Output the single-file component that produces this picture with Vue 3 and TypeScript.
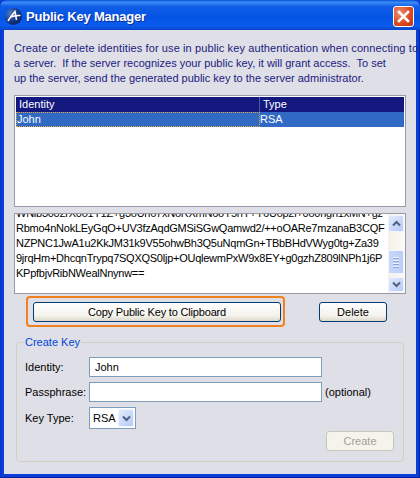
<template>
  <div class="window">
    <header class="titlebar">
      <svg class="app-icon" width="17" height="17" viewBox="0 0 17 17">
        <defs>
          <radialGradient id="orb" cx="0.3" cy="0.3" r="0.9">
            <stop offset="0" stop-color="#4a7ad0" />
            <stop offset="0.6" stop-color="#12307c" />
            <stop offset="1" stop-color="#0a1f5c" />
          </radialGradient>
        </defs>
        <circle cx="8.5" cy="8.5" r="8.5" fill="url(#orb)" />
        <path d="M3 13 Q6 8 10 3.5 L11.5 12 M5.5 9 Q10 7 15.5 7.5" fill="none" stroke="#fff" stroke-width="1.5" />
      </svg>
      <span class="title">Public Key Manager</span>
      <button class="close" type="button">
        <svg width="13" height="13" viewBox="0 0 13 13">
          <path d="M2 2 L11 11 M11 2 L2 11" stroke="#fff" stroke-width="2.6" stroke-linecap="square" />
        </svg>
      </button>
    </header>

    <main class="body">
      <p class="intro">
        <span v-for="line in introLines" :key="line">{{ line }}</span>
      </p>

      <div class="table-box">
        <div class="table-head">
          <span class="col-identity">Identity</span>
          <span class="col-type">Type</span>
        </div>
        <div v-for="row in identities" :key="row.name" class="table-row">
          <span class="col-identity focused">{{ row.name }}</span>
          <span class="col-type">{{ row.type }}</span>
        </div>
      </div>

      <div class="key-box">
        <div class="key-text">
          <div v-for="line in keyLines" :key="line">{{ line }}</div>
        </div>
        <div class="scrollbar">
          <div class="sb-btn">
            <svg width="9" height="7" viewBox="0 0 9 7"><path d="M1 5.5 L4.5 2 L8 5.5" fill="none" stroke="#4d6185" stroke-width="2" /></svg>
          </div>
          <div class="sb-track"></div>
          <div class="sb-thumb"><i></i><i></i><i></i><i></i></div>
          <div class="sb-btn down">
            <svg width="9" height="7" viewBox="0 0 9 7"><path d="M1 1.5 L4.5 5 L8 1.5" fill="none" stroke="#4d6185" stroke-width="2" /></svg>
          </div>
        </div>
      </div>

      <div class="actions">
        <div class="highlight">
          <button class="xp-btn copy" type="button">Copy Public Key to Clipboard</button>
        </div>
        <button class="xp-btn delete" type="button">Delete</button>
      </div>

      <fieldset class="create">
        <legend>Create Key</legend>
        <div class="form-row">
          <label>Identity:</label>
          <div class="input">John</div>
        </div>
        <div class="form-row">
          <label>Passphrase:</label>
          <div class="input"></div>
          <span class="hint">(optional)</span>
        </div>
        <div class="form-row">
          <label>Key Type:</label>
          <div class="select">
            <span>RSA</span>
            <div class="select-btn">
              <svg width="9" height="7" viewBox="0 0 9 7"><path d="M1 1.5 L4.5 5 L8 1.5" fill="none" stroke="#4d6185" stroke-width="2" /></svg>
            </div>
          </div>
        </div>
        <div class="form-footer">
          <button class="xp-btn create-btn" type="button" disabled>Create</button>
        </div>
      </fieldset>
    </main>
  </div>
</template>

<script setup lang="ts">
interface Identity {
  name: string;
  type: string;
}

const introLines: string[] = [
  'Create or delete identities for use in public key authentication when connecting to',
  'a server.\u00a0 If the server recognizes your public key, it will grant access.\u00a0 To set',
  'up the server, send the generated public key to the server administrator.',
];

const identities: Identity[] = [{ name: 'John', type: 'RSA' }];

const keyLines: string[] = [
  'WNlb3002rX0o1Y1Z+g3oUh67xNoRXmN6oY5nY+Y6Uop2l+0o0ngn1xMN+gz',
  'Rbmo4nNokLEyGqO+UV3fzAqdGMSiSGwQamwd2/++oOARe7mzanaB3CQF',
  'NZPNC1JwA1u2KkJM31k9V55ohwBh3Q5uNqmGn+TBbBHdVWyg0tg+Za39',
  '9jrqHm+DhcqnTrypq7SQXQS0ljp+OUqlewmPxW9x8EY+g0gzhZ809lNPh1j6P',
  'KPpfbjvRibNWealNnynw==',
];
</script>

<style>
html,
body {
  margin: 0;
  background: #0a3fd6;
}
</style>

<style scoped>
.window {
  width: 420px;
  height: 478px;
  box-sizing: border-box;
  display: flex;
  flex-direction: column;
  font-family: "Liberation Sans", Arial, sans-serif;
  font-size: 11px;
  color: #000;
  overflow: hidden;
  background: #0a3fd6;
  border-radius: 7px 7px 0 0;
  box-shadow: inset 1px 0 0 #0831d9, inset -1px 0 0 #0020a0, inset 0 -1px 0 #0020a0;
}

.titlebar {
  height: 30px;
  flex: none;
  box-sizing: border-box;
  display: flex;
  align-items: center;
  padding: 3px 6px 0 5px;
  background: linear-gradient(180deg, #0a53dc 0%, #3c8cf6 8%, #0f5ce6 22%, #0454e4 60%, #0a5cf0 85%, #0a45c8 100%);
}

.app-icon {
  flex: none;
  margin-right: 4px;
}

.title {
  flex: 1;
  color: #fff;
  font-size: 13px;
  font-weight: bold;
  letter-spacing: -0.2px;
  text-shadow: 1px 1px 0 #0a2f9c;
}

.close {
  width: 21px;
  height: 21px;
  padding: 0;
  display: flex;
  align-items: center;
  justify-content: center;
  border: 1px solid #fff;
  border-radius: 3px;
  background: radial-gradient(circle at 30% 30%, #ee8a6c, #d8491f 60%, #b83410);
}

.body {
  flex: 1;
  margin: 0 4px 4px;
  padding: 11px 10px 0;
  background: #dfdfe7;
  display: flex;
  flex-direction: column;
  min-height: 0;
}

.intro {
  margin: 0;
  color: #1a1a80;
  line-height: 15px;
  white-space: nowrap;
}

.intro span {
  display: block;
}

.intro span:first-child {
  letter-spacing: 0.11px;
}

.table-box {
  margin-top: 9px;
  height: 112px;
  flex: none;
  box-sizing: border-box;
  border: 1px solid #9a9aa6;
  background: #fff;
  padding: 1px;
}

.table-head,
.table-row {
  display: flex;
  height: 15px;
  line-height: 15px;
  color: #fff;
}

.table-head {
  background: #12187e;
}

.table-head .col-identity {
  padding-left: 3px;
  border-right: 1px solid #4a5a9c;
}

.table-head .col-type {
  padding-left: 3px;
}

.table-row {
  background: #316ac5;
}

.col-identity {
  width: 244px;
  box-sizing: border-box;
}

.focused {
  border: 1px dotted #e8a040;
  line-height: 13px;
  padding-left: 0;
}

.key-box {
  margin-top: 6px;
  height: 81px;
  flex: none;
  box-sizing: border-box;
  border: 1px solid #9a9aa6;
  background: #fff;
  display: flex;
  overflow: hidden;
}

.key-text {
  flex: 1;
  min-width: 0;
  margin-top: -8px;
  padding-left: 1px;
  line-height: 15px;
  letter-spacing: -0.25px;
  white-space: nowrap;
  overflow: hidden;
}

.scrollbar {
  width: 16px;
  flex: none;
  display: flex;
  flex-direction: column;
  background: linear-gradient(90deg, #f3f1e8, #fbfaf6);
  padding: 1px 1px 1px 0;
}

.sb-btn,
.select-btn {
  display: flex;
  align-items: center;
  justify-content: center;
  background: linear-gradient(135deg, #e3ebfd, #b6c9f6);
  border: 1px solid #f2f5fe;
  box-sizing: border-box;
  border-radius: 2px;
}

.sb-btn {
  height: 17px;
  flex: none;
}

.sb-btn.down {
  margin-top: 3px;
  height: 15px;
}

.sb-track {
  flex: 1;
}

.sb-thumb {
  height: 24px;
  flex: none;
  box-sizing: border-box;
  border: 1px solid #f2f5fe;
  border-radius: 2px;
  background: linear-gradient(90deg, #c9d7f9, #bccdf7);
  display: flex;
  flex-direction: column;
  align-items: center;
  justify-content: center;
  gap: 1px;
}

.sb-thumb i {
  display: block;
  width: 6px;
  height: 1px;
  background: #eef2fd;
  border-bottom: 1px solid #8fa6d8;
}

.actions {
  display: flex;
  align-items: center;
  justify-content: space-between;
  margin-top: 2px;
  padding: 0 19px 0 12px;
}

.highlight {
  border: 2px solid #f0811e;
  border-radius: 4px;
  padding: 4px 2px 3px 5px;
}

.xp-btn {
  box-sizing: border-box;
  height: 20px;
  padding: 0;
  font: inherit;
  color: #000;
  border: 1px solid #003c74;
  border-radius: 3px;
  background: linear-gradient(180deg, #ffffff, #f4f3ec 70%, #dcd8cc);
}

.copy {
  width: 248px;
  display: block;
  letter-spacing: -0.18px;
}

.delete {
  width: 68px;
}

.create {
  margin: 9px 2px 0;
  padding: 9px 9px 0 8px;
  height: 126px;
  box-sizing: border-box;
  border: 1px solid #d0d0bf;
  border-radius: 4px;
  min-width: 0;
}

legend {
  padding: 0 1px;
  margin-left: -1px;
  color: #0046d5;
}

.form-row {
  display: flex;
  align-items: center;
  margin-bottom: 5px;
}

.form-row label {
  width: 64px;
  flex: none;
}

.input {
  width: 233px;
  height: 20px;
  box-sizing: border-box;
  border: 1px solid #7f9db9;
  background: #fff;
  padding-left: 5px;
  line-height: 18px;
}

.hint {
  margin-left: 3px;
}

.select {
  width: 47px;
  height: 22px;
  box-sizing: border-box;
  border: 1px solid #7f9db9;
  background: #fff;
  display: flex;
  align-items: center;
  justify-content: space-between;
  padding: 1px 1px 1px 3px;
}

.select-btn {
  width: 16px;
  height: 18px;
}

.form-footer {
  display: flex;
  justify-content: flex-end;
  margin-top: -3px;
}

.create-btn {
  width: 68px;
  border-color: #c9c7ba;
  color: #a1a192;
  background: #f4f4ec;
}
</style>
